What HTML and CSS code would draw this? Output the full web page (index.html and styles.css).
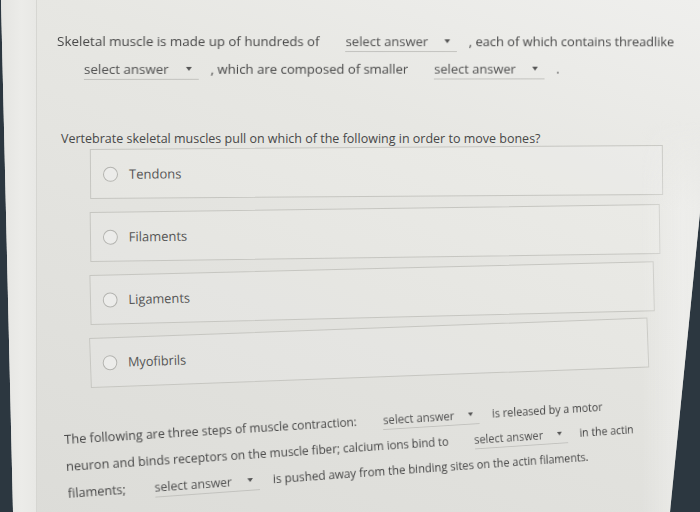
FILE: index.html
```html
<!DOCTYPE html>
<html lang="en">
<head>
<meta charset="utf-8">
<title>Muscle quiz</title>
<link rel="stylesheet" href="styles.css">
</head>
<body>
<div class="screen">
  <aside class="rail"></aside>
  <main class="panel">
    <p class="fill fill-top">Skeletal muscle is made up of hundreds of<span class="select">select answer<span class="caret"></span></span>, each of which contains threadlike<br><span class="select">select answer<span class="caret"></span></span>, which are composed of smaller<span class="select">select answer<span class="caret"></span></span>.</p>

    <section class="question">
      <p class="prompt">Vertebrate skeletal muscles pull on which of the following in order to move bones?</p>
      <ul class="options">
        <li class="option opt-1"><span class="radio"></span><span class="label">Tendons</span></li>
        <li class="option opt-2"><span class="radio"></span><span class="label">Filaments</span></li>
        <li class="option opt-3"><span class="radio"></span><span class="label">Ligaments</span></li>
        <li class="option opt-4"><span class="radio"></span><span class="label">Myofibrils</span></li>
      </ul>
    </section>

    <p class="fill fill-bottom">The following are three steps of muscle contraction:<span class="select">select answer<span class="caret"></span></span>is released by a motor<br>neuron and binds receptors on the muscle fiber; calcium ions bind to<span class="select">select answer<span class="caret"></span></span>in the actin<br>filaments;<span class="select">select answer<span class="caret"></span></span>is pushed away from the binding sites on the actin filaments.</p>
  </main>
  <div class="edge"></div>
</div>
</body>
</html>
```

FILE: styles.css
```css
* { box-sizing: border-box; }

html, body {
  margin: 0;
  padding: 0;
  width: 700px;
  height: 512px;
  overflow: hidden;
  background: #2c3740;
  font-family: "Open Sans", "Noto Sans", sans-serif;
}

.screen {
  position: relative;
  width: 700px;
  height: 512px;
  display: flex;
  background: linear-gradient(200deg, #efefed 0%, #e7e7e3 30%, #e2e2de 60%, #dcdcd8 100%);
  clip-path: polygon(1px 0, 700px 0, 700px 212px, 670px 512px, 13px 512px);
}

.rail {
  flex: 0 0 37px;
  background: linear-gradient(90deg, #e4e4e1 0%, #ecece9 60%, #e8e8e5 100%);
  border-right: 1px solid #d6d6d2;
}

.panel {
  flex: 1;
  padding: 27px 0 0 20px;
  color: #444;
}

/* light rim of the screen along the right edge of the photo */
.edge {
  position: absolute;
  top: 120px;
  right: 0;
  width: 60px;
  height: 392px;
  background: linear-gradient(90deg, rgba(240, 240, 238, 0) 0%, rgba(240, 240, 238, 0.7) 70%, rgba(236, 236, 234, 0.9) 100%);
  -webkit-mask-image: linear-gradient(180deg, transparent 0, #000 90px);
  mask-image: linear-gradient(180deg, transparent 0, #000 90px);
  pointer-events: none;
}

.fill {
  margin: 0;
  font-size: 13.5px;
  line-height: 28px;
  color: #474747;
  white-space: nowrap;
}

.fill-top {
  transform-origin: 0 50%;
  transform: perspective(1000px) rotateY(3deg);
}

.select {
  display: inline-flex;
  align-items: center;
  justify-content: space-between;
  width: 116px;
  margin: 0 12px 0 27px;
  padding-bottom: 1px;
  line-height: 18px;
  color: #505050;
  border-bottom: 1px solid #c2c2be;
}

.caret {
  width: 0;
  height: 0;
  margin-right: 7px;
  border-left: 3px solid transparent;
  border-right: 3px solid transparent;
  border-top: 4px solid #555;
}

.question {
  margin-top: 46px;
}

.prompt {
  margin: 0 0 0 4px;
  font-size: 12.5px;
  line-height: 20px;
  color: #484848;
  white-space: nowrap;
}

.options {
  list-style: none;
  margin: 0 0 0 33px;
  padding: 0;
  display: flex;
  flex-direction: column;
  gap: 13px;
}

.option {
  display: flex;
  align-items: center;
  gap: 11px;
  width: 573px;
  height: 50px;
  padding-left: 12px;
  border: 1px solid #c6c6c1;
  background: rgba(255, 255, 255, 0.12);
  font-size: 13px;
  color: #555;
  transform-origin: 0 50%;
}

.opt-1 { transform: rotate(-0.4deg); }
.opt-2 { transform: rotate(-0.8deg) scaleX(0.995); }
.opt-3 { transform: rotate(-1.4deg) scaleX(0.985); }
.opt-4 { transform: rotate(-2.1deg) scaleX(0.975); }

.radio {
  flex: 0 0 auto;
  width: 15px;
  height: 15px;
  border-radius: 50%;
  border: 1px solid #b4b4b0;
  background: #ececea;
}

.fill-bottom {
  margin: 38px 0 0 9px;
  font-size: 13px;
  line-height: 27px;
  transform-origin: 0 50%;
  transform: perspective(1000px) rotateY(10deg) rotate(-3.7deg);
}

.fill-bottom .select {
  width: 112px;
  margin: 0 15px 0 30px;
}
```
